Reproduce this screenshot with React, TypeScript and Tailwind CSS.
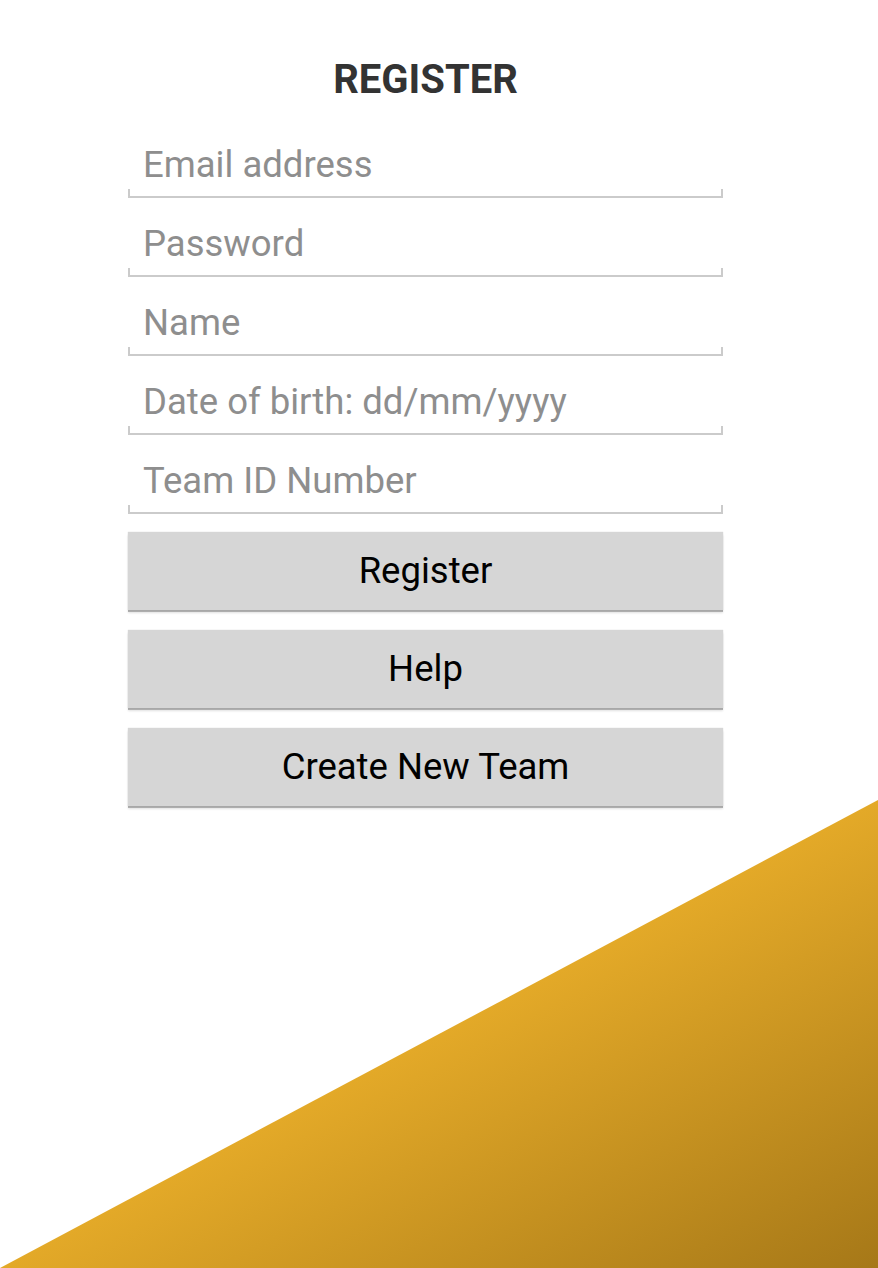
import React from 'react';

const FIELDS = ['Email address', 'Password', 'Name', 'Date of birth: dd/mm/yyyy', 'Team ID Number'];
const BUTTONS = ['Register', 'Help', 'Create New Team'];

const Field: React.FC<{ placeholder: string }> = ({ placeholder }) => (
  <div className="h-[79px] flex flex-col justify-end">
    <input
      type="text"
      placeholder={placeholder}
      className="h-[48px] w-full bg-transparent pl-[15px] text-[36.5px] text-[#333] placeholder:text-[#8e8e8e] outline-none"
    />
    {/* holo style underline with end ticks */}
    <div className="h-[9px] border-l-2 border-r-2 border-b-2 border-[#cbcbcb]" />
  </div>
);

const App: React.FC = () => {
  return (
    <div className="relative min-h-[1268px] bg-white overflow-hidden font-['Roboto',sans-serif]">
      <div className="relative z-10 ml-[128px] w-[595px] pt-[58px]">
        <h1 className="text-center text-[40px] leading-[44px] font-bold text-[#333]">REGISTER</h1>

        <div className="mt-[17px]">
          {FIELDS.map((f) => (
            <Field key={f} placeholder={f} />
          ))}
        </div>

        <div className="mt-[18px] flex flex-col gap-[20px]">
          {BUTTONS.map((b) => (
            <button
              key={b}
              className="h-[78px] w-full bg-[#d6d6d6] text-[36.5px] text-black shadow-[0_0_1px_rgba(0,0,0,0.2),0_2px_0_#aeaeae,0_3px_2px_rgba(0,0,0,0.12)]"
            >
              {b}
            </button>
          ))}
        </div>
      </div>

      {/* gold corner */}
      <svg className="absolute bottom-0 right-0" width="878" height="468" viewBox="0 0 878 468">
        <defs>
          <linearGradient id="gold" gradientUnits="userSpaceOnUse" x1="684" y1="104" x2="878" y2="468">
            <stop offset="0" stopColor="#e3a928" />
            <stop offset="1" stopColor="#a67818" />
          </linearGradient>
        </defs>
        <polygon points="0,468 878,0 878,468" fill="url(#gold)" />
      </svg>
    </div>
  );
};

export default App;
